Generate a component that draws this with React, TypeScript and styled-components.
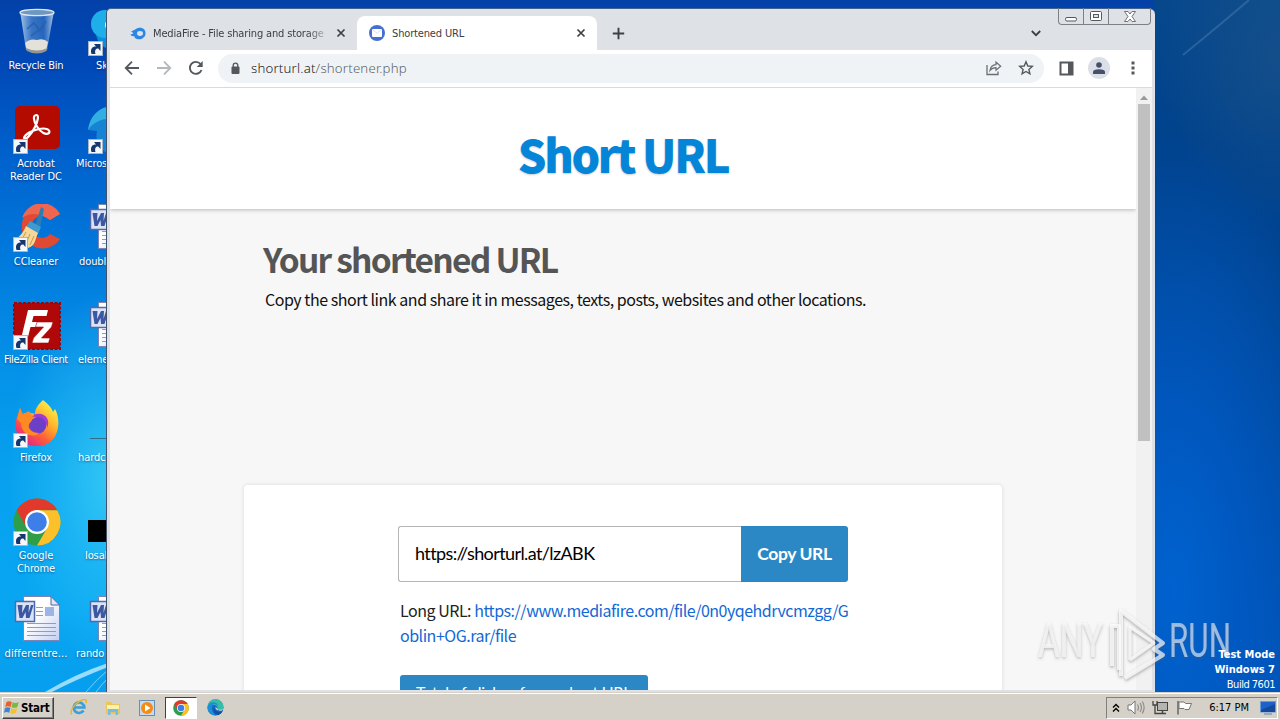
import React from 'react';
import styled, { createGlobalStyle, css } from 'styled-components';

const GlobalStyle = createGlobalStyle`
  * {
    box-sizing: border-box;
  }
  body {
    margin: 0;
    overflow: hidden;
  }
  svg {
    display: block;
    flex: none;
  }
`

const uiFont = `'DejaVu Sans Condensed', 'DejaVu Sans', sans-serif`
const pageFont = `'Noto Sans CJK SC', 'Open Sans', sans-serif`

const Screen = styled.div`
  display: flex;
  flex-direction: column;
  width: 1280px;
  height: 720px;
  overflow: hidden;
  font-family: ${uiFont};
  font-size: 11px;
`

const Desktop = styled.div`
  position: relative;
  flex: 1;
  overflow: hidden;
  background:
    radial-gradient(170px 460px at 20px 590px, #0062cf 0, rgba(0, 92, 200, 0.75) 40%, rgba(0, 84, 184, 0) 100%) 1154px 0 / 126px 100% no-repeat,
    radial-gradient(120px 160px at 126px 60px, rgba(30, 84, 136, 0.6) 0, rgba(20, 74, 130, 0) 100%) 1154px 0 / 126px 100% no-repeat,
    linear-gradient(180deg, #07488c 0, #00428c 150px, #00479a 400px, #0050b2 692px) 1154px 0 / 126px 100% no-repeat,
    radial-gradient(105px 190px at 112px 480px, rgba(80, 225, 250, 0.6) 0, rgba(70, 215, 250, 0.3) 50%, rgba(60, 210, 250, 0) 100%),
    linear-gradient(180deg, #0341a8 0, #0048b6 60px, #0060cc 150px, #0078dc 250px, #0492e8 370px, #06a0ee 470px, #08a6f2 600px, #069eee 692px);
`

const Rays = styled.svg`
  position: absolute;
  left: 0;
  top: 0;
`

const IconGrid = styled.div`
  display: grid;
  grid-template-columns: 72px 78px;
  grid-auto-rows: 98px;
  width: 150px;
  padding-top: 8px;
`

const Shortcut = styled.div`
  display: flex;
  flex-direction: column;
  align-items: center;
  > svg {
    margin-left: 2px;
  }
`

const ShortcutLabel = styled.div<{ $indent?: number; $track?: number }>`
  margin-top: 3px;
  line-height: 13px;
  color: #fff;
  text-align: center;
  white-space: pre;
  letter-spacing: ${p => p.$track ?? -0.1}px;
  text-shadow: 0 1px 2px rgba(0, 20, 70, 0.5);
  ${p => p.$indent !== undefined && css`
    align-self: flex-start;
    margin-left: ${p.$indent}px;
  `}
`

const BuildInfo = styled.div`
  position: absolute;
  right: 5px;
  top: 648px;
  text-align: right;
  color: #fff;
  line-height: 14.6px;
  white-space: nowrap;
`

const BuildNumber = styled.div`
  padding-top: 1px;
  letter-spacing: -0.5px;
`

const Mark = styled.svg`
  position: absolute;
  left: 1030px;
  top: 600px;
`

/* browser window */

const Window = styled.div`
  position: absolute;
  left: 106px;
  top: 8px;
  width: 1049px;
  height: 684px;
  display: flex;
  flex-direction: column;
  padding: 0 3px 2px 3px;
  background: #dee1e6;
  border-left: 1px solid #43536b;
  border-top: 1px solid #44618c;
  border-radius: 5px 6px 0 0;
`

const TabStrip = styled.div`
  display: flex;
  height: 41px;
  padding: 7px 0 0 11px;
`

const Tab = styled.div<{ $active?: boolean; $width: number }>`
  display: flex;
  align-items: center;
  width: ${p => p.$width}px;
  height: 34px;
  padding: 0 10px 0 ${p => p.$active ? 12 : 9}px;
  border-radius: 8px 8px 0 0;
  background: ${p => p.$active ? '#fff' : 'transparent'};
  color: #3c4043;
  gap: 7px;
`

const TabTitle = styled.div<{ $fade?: boolean }>`
  flex: 1;
  overflow: hidden;
  white-space: nowrap;
  letter-spacing: -0.15px;
  ${p => p.$fade && css`
    mask-image: linear-gradient(90deg, #000 88%, transparent 102%);
  `}
`

const NewTab = styled.div`
  padding: 11px 0 0 15px;
`

const StripEnd = styled.div`
  flex: 1;
  display: flex;
  justify-content: flex-end;
  padding: 12px 17px 0 0;
`

const Caption = styled.div`
  display: flex;
  width: 93px;
  height: 17px;
  margin: -8px 1px 0 0;
  border: 1px solid #7d8087;
  border-top: 0;
  border-radius: 0 0 4px 4px;
`

const CaptionButton = styled.div<{ $width: number }>`
  display: flex;
  align-items: center;
  justify-content: center;
  width: ${p => p.$width}px;
  & + & {
    border-left: 1px solid #7d8087;
  }
`

const Toolbar = styled.div`
  display: flex;
  align-items: center;
  height: 38px;
  padding: 0 0 1px 14px;
  background: #fff;
  border-bottom: 1px solid #d8dade;
`

const NavIcons = styled.div`
  display: flex;
  gap: 16px;
`

const Omnibox = styled.div`
  display: flex;
  align-items: center;
  width: 826px;
  height: 29px;
  margin-left: 14px;
  padding: 0 10px 0 12px;
  border-radius: 15px;
  background: #f0f3f5;
`

const Address = styled.div`
  flex: 1;
  margin-left: 10px;
  font-family: 'Noto Sans', sans-serif;
  font-size: 13.2px;
  font-weight: 300;
  color: #5f6368;
  letter-spacing: 0.2px;
  b {
    font-weight: 300;
    color: #202124;
  }
`

const BarIcons = styled.div`
  display: flex;
  align-items: center;
  gap: 15px;
`

const Avatar = styled.div`
  display: flex;
  width: 22px;
  height: 22px;
  align-items: center;
  justify-content: center;
  margin: 0 6px 0 14px;
  border-radius: 50%;
  background: #dbdfe6;
`

/* web page */

const Viewport = styled.div`
  display: flex;
  flex: 1;
  min-height: 0;
`

const Page = styled.div`
  flex: 1;
  overflow: hidden;
  background: #f7f7f7;
  font-family: ${pageFont};
`

const Header = styled.div`
  display: flex;
  justify-content: center;
  height: 121px;
  padding-top: 30px;
  background: #fff;
  box-shadow: 0 1px 4px rgba(0, 0, 0, 0.25);
`

const SiteTitle = styled.h1`
  margin: 0;
  font-size: 45px;
  font-weight: 800;
  line-height: 72px;
  letter-spacing: -2.3px;
  color: #0585d8;
  text-shadow: 0 1px 2px rgba(0, 0, 0, 0.2);
`

const Intro = styled.div`
  height: 276px;
  padding: 25px 0 0 153px;
`

const Heading = styled.h2`
  margin: 0;
  font-size: 33.5px;
  font-weight: 700;
  line-height: 50px;
  letter-spacing: -1.75px;
  color: #555;
  white-space: nowrap;
`

const Lead = styled.p`
  margin: 3px 0 0 2px;
  font-size: 16px;
  line-height: 24px;
  letter-spacing: -0.47px;
  color: #111;
  white-space: nowrap;
`

const Card = styled.div`
  width: 758px;
  height: 240px;
  margin-left: 134px;
  padding: 41px 154px 0;
  border-radius: 4px;
  background: #fff;
  box-shadow: 0 0 4px rgba(0, 0, 0, 0.12);
`

const UrlRow = styled.div`
  display: flex;
  width: 450px;
  height: 56px;
  font-family: Lato, sans-serif;
  font-size: 18px;
`

const UrlField = styled.div`
  flex: 1;
  padding-left: 16px;
  line-height: 53px;
  letter-spacing: -0.6px;
  border: 1px solid #b5b5b5;
  border-right: 0;
  border-radius: 3px 0 0 3px;
  color: #000;
`

const CopyButton = styled.div`
  width: 107px;
  line-height: 56px;
  text-align: center;
  font-size: 17.5px;
  font-weight: 700;
  letter-spacing: -0.4px;
  color: #fff;
  background: #2c87c5;
  border-radius: 0 3px 3px 0;
`

const LongUrl = styled.div`
  margin: 16px 0 0 2px;
  font-size: 16px;
  line-height: 25px;
  letter-spacing: -0.48px;
  color: #222;
  white-space: nowrap;
`

const UrlLink = styled.span`
  color: #1268d4;
`

const ClicksButton = styled.div`
  width: 248px;
  height: 44px;
  margin: 27px 0 0 2px;
  padding-left: 16px;
  line-height: 34px;
  font-family: Lato, sans-serif;
  font-size: 16px;
  letter-spacing: -0.22px;
  color: #fff;
  background: #2c87c5;
  border-radius: 3px;
  white-space: nowrap;
`

const Scrollbar = styled.div`
  display: flex;
  flex-direction: column;
  align-items: center;
  width: 16px;
  padding-top: 7px;
  background: #f1f1f1;
`

const Thumb = styled.div`
  width: 12px;
  height: 337px;
  margin-top: 4px;
  background: #c0c0c0;
`

/* taskbar */

const Taskbar = styled.div`
  display: flex;
  align-items: center;
  height: 28px;
  padding: 3px 2px 1px;
  background: #d5d0c8;
  border-top: 1px solid #d5d0c8;
  box-shadow: inset 0 1px 0 #fff;
`

const StartButton = styled.div`
  display: flex;
  align-items: center;
  width: 52px;
  height: 22px;
  padding-left: 1px;
  gap: 1px;
  font-weight: 700;
  font-size: 11.5px;
  letter-spacing: -0.2px;
  color: #000;
  border: 1px solid;
  border-color: #fff #404040 #404040 #fff;
  box-shadow: inset -1px -1px 0 #808080;
`

const QuickLaunch = styled.div`
  display: flex;
  align-items: center;
  margin-left: 8px;
`

const Task = styled.div<{ $active?: boolean }>`
  display: flex;
  align-items: center;
  justify-content: center;
  width: ${p => p.$active ? 32 : 34}px;
  height: 22px;
  margin: 0 ${p => p.$active ? 1 : 0}px;
  background: ${p => p.$active ? '#fff' : 'transparent'};
  ${p => p.$active && css`
    border: 1px solid;
    border-color: #404040 #fff #fff #404040;
  `}
`

const Tray = styled.div`
  display: flex;
  align-items: center;
  width: 172px;
  height: 22px;
  margin-left: auto;
  padding: 0 1px 0 5px;
  border: 1px solid;
  border-color: #808080 #fff #fff #808080;
  color: #000;
`

const TrayIcons = styled.div`
  display: flex;
  align-items: center;
  gap: 7px;
`

const Clock = styled.div`
  margin: 0 11px 0 auto;
  white-space: nowrap;
`

const LinkArrow = () => (
  <g>
    <rect x="0.5" y="33.5" width="14" height="14" fill="#f5f8fb" stroke="#a9b4c4" />
    <path d="M3.5 46 C2 41 4 38.500 8 38.500 L6 36 L12.500 36 L12.500 43 L10.300 40.500 C7.500 40.500 6.500 42.500 7.500 46 Z" fill="#17356f" />
  </g>
)

const RecycleBin = () => (
  <svg width="48" height="48" viewBox="0 0 48 48">
    <defs>
      <linearGradient id="bin" x1="0" x2="1" y1="0" y2="0">
        <stop offset="0" stopColor="#c4dcf2" stopOpacity=".85" />
        <stop offset=".35" stopColor="#5d95d3" stopOpacity=".6" />
        <stop offset=".7" stopColor="#3f7cc8" stopOpacity=".6" />
        <stop offset="1" stopColor="#c0d8ee" stopOpacity=".9" />
      </linearGradient>
    </defs>
    <path d="M7 3 L13 42 Q24 48 34 42 L41 3 Z" fill="url(#bin)" />
    <ellipse cx="24" cy="4.500" rx="17" ry="3.200" fill="#6f97bf" stroke="#dce6ee" strokeWidth="1.300" />
    <path d="M14 21 L21 15 L27 23 L33 13 M18 28 L31 18" stroke="#245da8" strokeWidth="2" fill="none" opacity=".65" />
    <path d="M12 35 Q17 30 24 32 Q31 30 35 34 L33.500 41 Q24 46 13.500 41 Z" fill="#e3e1da" />
    <path d="M13 40 Q24 45 34.500 40 L33.500 43 Q24 48 14 43 Z" fill="#93958f" />
  </svg>
)

const Acrobat = () => (
  <svg width="48" height="48" viewBox="0 0 48 48">
    <rect x="2" y="0" width="45" height="43" rx="5" fill="#b30b00" />
    <path d="M23.500 9 C19.500 9 20.500 15 24 20.500 C28 27 33 29 36 27 C38 24 33 21.500 26 23 C19 24.500 12 28 11 32 C12 35 18 29 22 21 C25 15 26 9 23.500 9 Z" fill="none" stroke="#fff" strokeWidth="2.200" />
    <LinkArrow />
  </svg>
)

const CCleaner = () => (
  <svg width="48" height="48" viewBox="0 0 48 48">
    <path d="M47 10 A21 22 0 1 0 47 35 L37 30 A10.500 11 0 1 1 37 16 Z" fill="#de4a32" />
    <path d="M47 10 A21 22 0 0 0 9 14 Q22 5 37 16 Z" fill="#ee6650" />
    <path d="M28 3 L31 5 L27 24 L22 22 Z" fill="#2c7db5" />
    <path d="M17 17 L28 23 L25 30 L13 23 Z" fill="#3f9ad0" />
    <path d="M13 22 L25 29 C22 36 22 42 15 44 L2 36 Q10 30 13 22 Z" fill="#f5d899" />
    <path d="M13 28 L8 37 M17 30 L13 40 M21 32 L17 41" stroke="#c99b50" />
    <LinkArrow />
  </svg>
)

const FileZilla = () => (
  <svg width="48" height="48" viewBox="0 0 48 48">
    <rect x="1" y="1" width="46" height="46" fill="#b00808" stroke="#98080a" strokeWidth="2" strokeDasharray="3 1.500" />
    <path d="M15 8 H35 L33.500 14 H20.500 L19 20 H28 L26.500 25 H17.500 L14 39 H7.500 Z" fill="#fff" />
    <path d="M24 20 H40 L38.500 25 L28.500 36 H37 L35.500 41 H19 L20.500 36 L30.500 25 H22.500 Z" fill="#fff" stroke="#b00808" strokeWidth=".6" />
    <LinkArrow />
  </svg>
)

const Firefox = () => (
  <svg width="48" height="48" viewBox="0 0 48 48">
    <defs>
      <linearGradient id="fox" x1=".85" y1=".1" x2=".2" y2=".95">
        <stop offset="0" stopColor="#fff044" />
        <stop offset=".35" stopColor="#ffb02a" />
        <stop offset=".65" stopColor="#ff5f38" />
        <stop offset="1" stopColor="#e3208c" />
      </linearGradient>
    </defs>
    <path d="M30 0 C35 4 39 8 40 12 L42 9 C49 21 46 46 24 46 C7 46 1 33 3 20 L7 8 L10 14 C13 12 17 12 22 14 C22 8 26 4 30 0 Z" fill="url(#fox)" />
    <circle cx="24" cy="24.500" r="9.500" fill="#7440cb" />
    <path d="M21 14.500 C32 11 38 20 34 28 C34 20 29 19 21 17 Z" fill="#a43ad0" />
    <path d="M7 8 L9 15 L16 11 L18 16 L25 17.500 C24 21 19 21.500 17 22.500 C13 28 19 33 26 33 C20 39 8 34 8 23 L4 19 Z" fill="#ff8a21" />
    <circle cx="25" cy="24.500" r="7.500" fill="#6b3fc6" />
    <LinkArrow />
  </svg>
)

const ChromeLogo = ({ size }: { size: number }) => (
  <svg width={size} height={size} viewBox="0 0 48 48">
    <circle cx="24" cy="24" r="23.500" fill="#2e9e48" />
    <path d="M3.700 12.200 A23.500 23.500 0 0 1 44.300 12.200 L24 12.200 L13.800 30 Z" fill="#e13a2c" />
    <path d="M44.300 12.200 A23.500 23.500 0 0 1 24 47.500 L34.200 30 L24 12.200 Z" fill="#fbc02a" />
    <circle cx="24" cy="24" r="12" fill="#fff" />
    <circle cx="24" cy="24" r="9.800" fill="#3e7ee8" />
  </svg>
)

const ChromeShortcut = () => (
  <svg width="48" height="48" viewBox="0 0 48 48">
    <ChromeLogo size={48} />
    <LinkArrow />
  </svg>
)

const WordDoc = () => (
  <svg width="48" height="48" viewBox="0 0 48 48">
    <defs>
      <linearGradient id="sheet" x1="0" y1="0" x2="1" y2="1">
        <stop offset=".4" stopColor="#fff" />
        <stop offset="1" stopColor="#c2cff2" />
      </linearGradient>
    </defs>
    <path d="M10.500 .5 H38 L46.500 9 V44.500 H10.500 Z" fill="url(#sheet)" stroke="#7786b4" />
    <path d="M38 .5 V9 H46.500 Z" fill="#dde7f8" stroke="#52679f" />
    <path d="M23 11.500 H30 M23 15.500 H30 M23 19.500 H30 M14 27.500 H43 M14 31.500 H43 M14 35.500 H43 M14 39.500 H43" stroke="#7f9fd6" />
    <rect x="32" y="11" width="9" height="9" fill="#9bb5e4" />
    <rect x="2.500" y="5.500" width="19" height="20" fill="#dbe3f6" stroke="#5068ae" strokeWidth="1.500" />
    <path d="M4.500 9 H9.500 L9 17 L13 9 H16 L15.500 17 L18 9 H20.500 L16.500 22 H13 L12.500 16 L9.500 22 H6.500 Z" fill="#3c58a2" />
  </svg>
)

const Skype = () => (
  <svg width="48" height="48" viewBox="0 0 48 48">
    <circle cx="26" cy="24" r="18" fill="#0b8edb" />
    <circle cx="17" cy="16" r="14" fill="#1eaeea" />
    <circle cx="21" cy="17" r="4" fill="#fff" />
    <LinkArrow />
  </svg>
)

const EdgeShortcut = () => (
  <svg width="48" height="48" viewBox="0 0 48 48">
    <path d="M0 24 C2 9 12 1 24 0 V48 C16 48 6 38 9 25 Z" fill="#1684d4" />
    <path d="M0 24 C2 9 12 1 24 0 V13 C14 12 6 16 0 24 Z" fill="#31afe2" />
    <LinkArrow />
  </svg>
)

const EdgeLogo = () => (
  <svg width="17" height="17" viewBox="0 0 17 17">
    <circle cx="8.500" cy="8.500" r="8" fill="#1568c4" />
    <path d="M.5 8 A8 8 0 0 1 16.500 8 C16.500 11.500 11 12 10.500 10 C11.500 7 7 4 .5 8 Z" fill="#36bda5" />
    <path d="M.5 8 C2 1 11 3 11 7 C7 3 4 6 5 11 C6 14 8 16 9 16.500 C3 16.500 0 12 .5 8 Z" fill="#1b8fda" />
    <path d="M8 8 C6 11 10 14 15.500 12.200 C14.500 14 13 15.200 11.500 15.900 C6 15 5.500 10 8 8 Z" fill="#124f9f" />
    <path d="M8.500 8 C8 10.500 11 12.300 15 11.500 L16.500 9 C15 11.200 10.500 11.300 10.500 9.500 Z" fill="#d5d0c8" />
  </svg>
)

const BlankFile = () => (
  <svg width="48" height="48" viewBox="0 0 48 48">
    <path d="M2 44.500 H40" transform="translate(0 -6)" stroke="#2d6f8c" />
  </svg>
)

const BlackFile = () => (
  <svg width="48" height="48" viewBox="0 0 48 48">
    <rect x="0" y="22" width="40" height="22" fill="#000" />
  </svg>
)

const MediaFire = () => (
  <svg width="16" height="13" viewBox="0 0 16 13">
    <path d="M1 4 C4 4 4.500 2 8 1 C13 0 16 3 15.500 7 C15 11 11 13 7 12 C5 11.500 4 10 4.500 9 C3 9.500 1 9 .5 7.500 L3.500 6.500 Z" fill="#2b86e6" />
    <ellipse cx="10" cy="6.500" rx="3" ry="2.400" fill="#dee1e6" />
  </svg>
)

const MailBadge = () => (
  <svg width="16" height="16" viewBox="0 0 16 16">
    <circle cx="8" cy="8" r="8" fill="#4670cf" />
    <rect x="3" y="4" width="10" height="8" rx="1" fill="#fff" />
    <path d="M3.500 4.500 L8 8.300 L12.500 4.500" fill="none" stroke="#c4d2f3" strokeWidth=".7" />
  </svg>
)

const Cross = () => (
  <svg width="12" height="12" viewBox="0 0 12 12">
    <path d="M2.500 2.500 L9.500 9.500 M9.500 2.500 L2.500 9.500" stroke="#3c4043" strokeWidth="1.700" />
  </svg>
)

const BackArrow = ({ color }: { color: string }) => (
  <svg width="16" height="16" viewBox="0 0 16 16">
    <path d="M15 8 H2 M8 1.700 L1.700 8 L8 14.300" fill="none" stroke={color} strokeWidth="1.800" />
  </svg>
)

const ForwardArrow = ({ color }: { color: string }) => (
  <svg width="16" height="16" viewBox="0 0 16 16">
    <path d="M1 8 H14 M8 1.700 L14.300 8 L8 14.300" fill="none" stroke={color} strokeWidth="1.800" />
  </svg>
)

const Reload = () => (
  <svg width="16" height="16" viewBox="0 0 16 16">
    <path d="M13.500 10 A6 6 0 1 1 12.500 4" fill="none" stroke="#54585d" strokeWidth="1.900" />
    <path d="M14.700 1 V7 H8.700 Z" fill="#54585d" />
  </svg>
)

const Padlock = () => (
  <svg width="11" height="13" viewBox="0 0 11 13">
    <rect x="1.500" y="4.500" width="8" height="7.500" rx="1" fill="#54585d" />
    <path d="M3.200 5 V3.500 A2.300 2.300 0 0 1 7.800 3.500 V5" fill="none" stroke="#54585d" strokeWidth="1.300" />
  </svg>
)

const Share = () => (
  <svg width="18" height="16" viewBox="0 0 18 16">
    <path d="M2 5 V14.500 H13 V11.500" fill="none" stroke="#6a6e73" strokeWidth="1.300" />
    <path d="M5 10.500 C5.500 6.500 8 4.700 11 4.600 V2 L15.700 6.200 L11 10.300 V7.600 C8.500 7.600 6.500 8.500 5 10.500 Z" fill="none" stroke="#6a6e73" strokeWidth="1.200" />
  </svg>
)

const Star = () => (
  <svg width="16" height="16" viewBox="0 0 16 16">
    <path d="M8 1.800 L9.800 6 L14.300 6.400 L10.900 9.400 L11.900 13.900 L8 11.500 L4.100 13.900 L5.100 9.400 L1.700 6.400 L6.200 6 Z" fill="none" stroke="#54585d" strokeWidth="1.400" />
  </svg>
)

const SidePanel = () => (
  <svg width="15" height="15" viewBox="0 0 15 15">
    <rect x="1.500" y="1.500" width="12" height="12" fill="#fff" stroke="#54585d" strokeWidth="2" />
    <rect x="9" y="1" width="5" height="13" fill="#54585d" />
  </svg>
)

const Person = () => (
  <svg width="12" height="12" viewBox="0 0 12 12">
    <circle cx="6" cy="3" r="2.800" fill="#46506b" />
    <path d="M0 12 V10 Q0 7.300 6 7.300 Q12 7.300 12 10 V12 Z" fill="#46506b" />
  </svg>
)

const Dots = () => (
  <svg width="4" height="14" viewBox="0 0 4 14">
    <path d="M.5 .5 H3.500 V3.500 H.5 Z M.5 5.500 H3.500 V8.500 H.5 Z M.5 10.500 H3.500 V13.500 H.5 Z" fill="#54585d" />
  </svg>
)

const WindowsFlag = () => (
  <svg width="16" height="15" viewBox="0 0 16 15">
    <path d="M2.500 2 Q5 .3 7.800 2 L6.600 7 Q4 5.600 1.200 7 Z" fill="#e8602c" />
    <path d="M8.700 2.300 Q11.500 3.800 14.700 2 L13.400 7 Q10.500 8.600 7.500 7.200 Z" fill="#79b843" />
    <path d="M1 8 Q3.800 6.500 6.400 8 L5.200 12.700 Q2.700 11.400 0 12.700 Z" fill="#3e86d2" />
    <path d="M7.300 8.300 Q10 9.700 13.200 8 L11.900 13 Q9 14.600 6.100 13 Z" fill="#f3c32c" />
  </svg>
)

const ExplorerE = () => (
  <svg width="18" height="17" viewBox="0 0 18 17">
    <path d="M13.500 11.500 A5.300 5.300 0 1 1 14.300 8.500 H5" fill="none" stroke="#3b9fdc" strokeWidth="2.700" />
    <path d="M2 15.500 C-1 13 4 5 10 2 C15 -.5 17.500 .5 16 4" fill="none" stroke="#e4b62d" strokeWidth="1.400" />
  </svg>
)

const Folder = () => (
  <svg width="16" height="16" viewBox="0 0 16 16">
    <path d="M1 2 H6 L7.500 4 H15 V14 H1 Z" fill="#e8c75a" />
    <path d="M2 5 H14 V9 H2 Z" fill="#fcf0b0" />
    <path d="M3 15 V9 H13 V15 H10.500 V12 H5.500 V15 Z" fill="#76bde0" />
  </svg>
)

const MediaPlayer = () => (
  <svg width="16" height="16" viewBox="0 0 16 16">
    <rect x=".5" y=".5" width="15" height="15" fill="#c4dcf2" stroke="#648fb8" />
    <circle cx="8" cy="8" r="6" fill="#f58b13" />
    <path d="M6 4.500 L11.500 8 L6 11.500 Z" fill="#fff" />
  </svg>
)

const tasks = [
  { key: 'ie', icon: <ExplorerE /> },
  { key: 'explorer', icon: <Folder /> },
  { key: 'wmp', icon: <MediaPlayer /> },
  { key: 'chrome', icon: <ChromeLogo size={16} />, active: true },
  { key: 'edge', icon: <EdgeLogo /> },
]

const shortcuts: { label: string; icon: React.ReactNode; indent?: number; track?: number }[] = [
  { label: 'Recycle Bin', icon: <RecycleBin />, track: -0.2 },
  { label: 'Sk', icon: <Skype />, indent: 24 },
  { label: 'Acrobat\nReader DC', icon: <Acrobat /> },
  { label: 'Micros', icon: <EdgeShortcut />, indent: 4 },
  { label: 'CCleaner', icon: <CCleaner /> },
  { label: 'doubl', icon: <WordDoc />, indent: 7 },
  { label: 'FileZilla Client', icon: <FileZilla />, track: -0.35 },
  { label: 'eleme', icon: <WordDoc />, indent: 6 },
  { label: 'Firefox', icon: <Firefox /> },
  { label: 'hardc', icon: <BlankFile />, indent: 6 },
  { label: 'Google\nChrome', icon: <ChromeShortcut /> },
  { label: 'losal', icon: <BlackFile />, indent: 13 },
  { label: 'differentre...', icon: <WordDoc />, track: 0.1 },
  { label: 'rando', icon: <WordDoc />, indent: 4 },
]

const Browser = () => (
  <Window>
    <TabStrip>
      <Tab $width={236}>
        <MediaFire />
        <TabTitle $fade>MediaFire - File sharing and storage</TabTitle>
        <Cross />
      </Tab>
      <Tab $active $width={240}>
        <MailBadge />
        <TabTitle>Shortened URL</TabTitle>
        <Cross />
      </Tab>
      <NewTab>
        <svg width="13" height="13" viewBox="0 0 13 13">
          <path d="M6.500 .8 V12.200 M.8 6.500 H12.200" stroke="#3c4043" strokeWidth="1.900" />
        </svg>
      </NewTab>
      <StripEnd>
        <svg width="10" height="10" viewBox="0 0 10 10">
          <path d="M.8 3 L5 7.200 L9.200 3" fill="none" stroke="#3c4043" strokeWidth="1.800" />
        </svg>
      </StripEnd>
      <Caption>
        <CaptionButton $width={24}>
          <svg width="12" height="12" viewBox="0 0 12 12">
            <rect x=".5" y="7.500" width="11" height="3.500" rx="1.500" fill="#fff" stroke="#55585f" />
          </svg>
        </CaptionButton>
        <CaptionButton $width={25}>
          <svg width="12" height="10" viewBox="0 0 12 10">
            <rect x=".5" y=".5" width="11" height="9" rx="1" fill="#fff" stroke="#55585f" />
            <rect x="3.500" y="3.500" width="5" height="3" fill="#dee1e6" stroke="#55585f" />
          </svg>
        </CaptionButton>
        <CaptionButton $width={42}>
          <svg width="12" height="11" viewBox="0 0 12 11">
            <path d="M.5 .5 H4 L6 3 L8 .5 H11.500 L8 5.500 L11.500 10.500 H8 L6 8 L4 10.500 H.5 L4 5.500 Z" fill="#fff" stroke="#66616a" strokeWidth=".9" />
          </svg>
        </CaptionButton>
      </Caption>
    </TabStrip>
    <Toolbar>
      <NavIcons>
        <BackArrow color="#54585d" />
        <ForwardArrow color="#b4b7bb" />
        <Reload />
      </NavIcons>
      <Omnibox>
        <Padlock />
        <Address><b>shorturl.at</b>/shortener.php</Address>
        <BarIcons>
          <Share />
          <Star />
        </BarIcons>
      </Omnibox>
      <BarIcons>
        <div />
        <SidePanel />
      </BarIcons>
      <Avatar><Person /></Avatar>
      <BarIcons>
        <div />
        <Dots />
      </BarIcons>
    </Toolbar>
    <Viewport>
      <Page>
        <Header>
          <SiteTitle>Short URL</SiteTitle>
        </Header>
        <Intro>
          <Heading>Your shortened URL</Heading>
          <Lead>Copy the short link and share it in messages, texts, posts, websites and other locations.</Lead>
        </Intro>
        <Card>
          <UrlRow>
            <UrlField>https://shorturl.at/lzABK</UrlField>
            <CopyButton>Copy URL</CopyButton>
          </UrlRow>
          <LongUrl>
            Long URL: <UrlLink>https://www.mediafire.com/file/0n0yqehdrvcmzgg/G<br />oblin+OG.rar/file</UrlLink>
          </LongUrl>
          <ClicksButton>Total of clicks of your short URL</ClicksButton>
        </Card>
      </Page>
      <Scrollbar>
        <svg width="8" height="5" viewBox="0 0 8 5">
          <path d="M0 5 L4 .5 L8 5 Z" fill="#9a9a9a" />
        </svg>
        <Thumb />
      </Scrollbar>
    </Viewport>
  </Window>
)

const Watermark = () => (
  <Mark width="210" height="84" viewBox="0 0 210 84">
    <defs>
      <filter id="soft" x="-10%" y="-20%" width="120%" height="150%">
        <feDropShadow dx="0" dy="1.500" stdDeviation="1.800" floodColor="#555" floodOpacity=".7" />
      </filter>
    </defs>
    <g filter="url(#soft)" fill="#fff" fillOpacity=".55" fontFamily="Roboto, sans-serif" fontSize="48" fontWeight="400">
      <text x="8" y="57" textLength="65" lengthAdjust="spacingAndGlyphs">ANY</text>
      <text x="139" y="57" textLength="62" lengthAdjust="spacingAndGlyphs">RUN</text>
      <g fill="none" stroke="#fff" strokeOpacity=".65" strokeWidth="4" strokeLinejoin="round">
        <path d="M82 66 V26 H89 V70" />
        <path d="M91 76 V11 L133 43 L124 49 L133 55 L95 78" />
        <path d="M100 60 V27 L124 43 L100 60" strokeWidth="3" />
      </g>
    </g>
  </Mark>
)

export default function App() {
  return (
    <Screen>
      <GlobalStyle />
      <Desktop>
        <Rays width="1280" height="692" viewBox="0 0 1280 692">
          <path d="M45 692 Q75 674 108 663 V667 Q75 680 52 692 Z" fill="#d5f6ff" opacity=".7" />
          <path d="M86 692 Q96 680 108 670 M96 692 Q102 684 108 678" stroke="#c0f0ff" fill="none" opacity=".6" />
          <path d="M1183 55 Q1215 29 1249 0" stroke="#4f80b5" strokeWidth="2" fill="none" opacity=".45" />
        </Rays>
        <IconGrid>
          {shortcuts.map(item => (
            <Shortcut key={item.label}>
              {item.icon}
              <ShortcutLabel $indent={item.indent} $track={item.track}>{item.label}</ShortcutLabel>
            </Shortcut>
          ))}
        </IconGrid>
        <Browser />
        <Watermark />
        <BuildInfo>
          <div><b>Test Mode</b></div>
          <div><b>Windows 7</b></div>
          <BuildNumber>Build 7601</BuildNumber>
        </BuildInfo>
      </Desktop>
      <Taskbar>
        <StartButton>
          <WindowsFlag />
          Start
        </StartButton>
        <QuickLaunch>
          {tasks.map(task => (
            <Task key={task.key} $active={task.active}>{task.icon}</Task>
          ))}
        </QuickLaunch>
        <Tray>
          <TrayIcons>
            <svg width="8" height="10" viewBox="0 0 8 10">
              <path d="M1 4.500 L4 1.500 L7 4.500 M1 8.500 L4 5.500 L7 8.500" fill="none" stroke="#000" strokeWidth="1.400" />
            </svg>
            <svg width="18" height="15" viewBox="0 0 18 15">
              <path d="M1 5 H4 L8 1 V14 L4 10 H1 Z" fill="#fff" stroke="#777" />
              <path d="M10.500 4.500 Q12.500 7.500 10.500 10.500 M13 3 Q16 7.500 13 12 M15.300 1.500 Q19 7.500 15.300 13.500" fill="none" stroke="#888" strokeWidth="1.100" />
            </svg>
            <svg width="17" height="15" viewBox="0 0 17 15">
              <rect x="5.500" y="2.500" width="10" height="8" fill="#b4b4b0" stroke="#444" />
              <path d="M7 13.500 H14 M10.500 11 V13" stroke="#444" strokeWidth="1.500" />
              <path d="M1 1 V5 H5 V1 M3 5 V13.500 H7" fill="none" stroke="#444" strokeWidth="1.300" />
            </svg>
            <svg width="17" height="15" viewBox="0 0 17 15">
              <path d="M2 1 V14.500" stroke="#666" strokeWidth="1.500" />
              <path d="M3 2 H8 L9.500 3.500 H15.500 L13 9.500 H9 L8 8.500 H3 Z" fill="#fff" stroke="#777" />
            </svg>
          </TrayIcons>
          <Clock>6:17 PM</Clock>
          <svg width="16" height="14" viewBox="0 0 16 14">
            <rect x=".5" y=".5" width="15" height="10.500" fill="#1c62c9" stroke="#6a9ad8" />
            <path d="M1 9 L15 3 V11 H1 Z" fill="#154a9b" />
            <path d="M4 13 H12" stroke="#8d9aa8" strokeWidth="1.500" />
          </svg>
        </Tray>
      </Taskbar>
    </Screen>
  )
}
